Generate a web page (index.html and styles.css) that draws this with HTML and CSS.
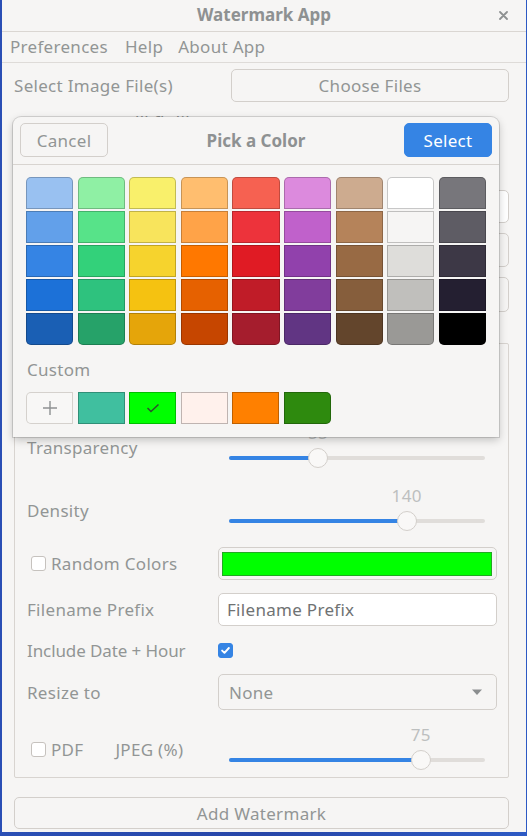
FILE: index.html
```html
<!DOCTYPE html>
<html>
<head>
<meta charset="utf-8">
<title>Watermark App</title>
<link rel="stylesheet" href="styles.css">
</head>
<body>
<div class="window">
  <header class="titlebar">
    <span></span>
    <span class="title">Watermark App</span>
    <span class="close"><svg width="9" height="9" viewBox="0 0 9 9"><path d="M1 1L8 8M8 1L1 8" stroke="#8e9192" stroke-width="1.8" stroke-linecap="round"/></svg></span>
  </header>
  <nav class="menubar">
    <span>Preferences</span><span>Help</span><span class="menu-about">About App</span>
  </nav>
  <main class="content">
    <div class="row row-files">
      <span class="label">Select Image File(s)</span>
      <button class="btn">Choose Files</button>
    </div>
    <div class="hint">lll flt lil</div>
    <div class="row row-a">
      <span class="label"></span>
      <div class="entry"></div>
    </div>
    <div class="row row-b">
      <span class="label"></span>
      <button class="btn"></button>
    </div>
    <div class="row row-c">
      <span class="label"></span>
      <button class="btn"></button>
    </div>

    <section class="frame">
      <div class="frow frow-trans">
        <span class="label slabel">Transparency</span>
        <div class="scale">
          <div class="scale-value-line"><span class="scale-value" style="left:34.8%">55</span></div>
          <div class="track-area"><div class="track"><div class="fill" style="width:34.8%"></div><div class="knob" style="left:34.8%"></div></div></div>
        </div>
      </div>
      <div class="frow frow-density">
        <span class="label slabel">Density</span>
        <div class="scale">
          <div class="scale-value-line"><span class="scale-value" style="left:69.4%">140</span></div>
          <div class="track-area"><div class="track"><div class="fill" style="width:69.4%"></div><div class="knob" style="left:69.4%"></div></div></div>
        </div>
      </div>
      <div class="frow frow-random">
        <label class="check-label"><span class="checkbox"></span>Random Colors</label>
        <div class="color-btn"><div class="color-fill"></div></div>
      </div>
      <div class="frow frow-prefix">
        <span class="label">Filename Prefix</span>
        <div class="entry entry-white">Filename Prefix</div>
      </div>
      <div class="frow frow-date">
        <span class="label narrow">Include Date + Hour</span>
        <span class="checkbox checked"><svg width="15" height="15" viewBox="0 0 15 15"><path d="M3.6 7.6L6.3 10.2L11.4 4.6" fill="none" stroke="#fff" stroke-width="2.2" stroke-linecap="round" stroke-linejoin="round"/></svg></span>
      </div>
      <div class="frow frow-resize">
        <span class="label">Resize to</span>
        <div class="combo"><span>None</span><svg width="12" height="7" viewBox="0 0 12 7"><path d="M1 0.5H11L6 6Z" fill="#8b8e8f"/></svg></div>
      </div>
      <div class="frow frow-pdf">
        <div class="pdf-cell">
          <label class="check-label slabel"><span class="checkbox"></span>PDF</label>
          <span class="label slabel">JPEG (%)</span>
        </div>
        <div class="scale">
          <div class="scale-value-line"><span class="scale-value" style="left:74.9%">75</span></div>
          <div class="track-area"><div class="track"><div class="fill" style="width:74.9%"></div><div class="knob" style="left:74.9%"></div></div></div>
        </div>
      </div>
    </section>

    <button class="btn btn-add">Add Watermark</button>
  </main>

  <div class="dialog">
    <div class="dlg-header">
      <button class="btn dlg-btn">Cancel</button>
      <span class="dlg-title">Pick a Color</span>
      <button class="btn dlg-btn btn-blue">Select</button>
    </div>
    <div class="dlg-body">
      <div class="palette">
        <div class="sw" style="background:#99c1f1"></div>
        <div class="sw" style="background:#8ff0a4"></div>
        <div class="sw" style="background:#f9f06b"></div>
        <div class="sw" style="background:#ffbe6f"></div>
        <div class="sw" style="background:#f66151"></div>
        <div class="sw" style="background:#dc8add"></div>
        <div class="sw" style="background:#cdab8f"></div>
        <div class="sw" style="background:#ffffff"></div>
        <div class="sw" style="background:#77767b"></div>

        <div class="sw" style="background:#62a0ea"></div>
        <div class="sw" style="background:#57e389"></div>
        <div class="sw" style="background:#f8e45c"></div>
        <div class="sw" style="background:#ffa348"></div>
        <div class="sw" style="background:#ed333b"></div>
        <div class="sw" style="background:#c061cb"></div>
        <div class="sw" style="background:#b5835a"></div>
        <div class="sw" style="background:#f6f5f4"></div>
        <div class="sw" style="background:#5e5c64"></div>

        <div class="sw" style="background:#3584e4"></div>
        <div class="sw" style="background:#33d17a"></div>
        <div class="sw" style="background:#f6d32d"></div>
        <div class="sw" style="background:#ff7800"></div>
        <div class="sw" style="background:#e01b24"></div>
        <div class="sw" style="background:#9141ac"></div>
        <div class="sw" style="background:#986a44"></div>
        <div class="sw" style="background:#deddda"></div>
        <div class="sw" style="background:#3d3846"></div>

        <div class="sw" style="background:#1c71d8"></div>
        <div class="sw" style="background:#2ec27e"></div>
        <div class="sw" style="background:#f5c211"></div>
        <div class="sw" style="background:#e66100"></div>
        <div class="sw" style="background:#c01c28"></div>
        <div class="sw" style="background:#813d9c"></div>
        <div class="sw" style="background:#865e3c"></div>
        <div class="sw" style="background:#c0bfbc"></div>
        <div class="sw" style="background:#241f31"></div>

        <div class="sw" style="background:#1a5fb4"></div>
        <div class="sw" style="background:#26a269"></div>
        <div class="sw" style="background:#e5a50a"></div>
        <div class="sw" style="background:#c64600"></div>
        <div class="sw" style="background:#a51d2d"></div>
        <div class="sw" style="background:#613583"></div>
        <div class="sw" style="background:#63452c"></div>
        <div class="sw" style="background:#9a9996"></div>
        <div class="sw" style="background:#000000"></div>
      </div>
      <div class="custom-label">Custom</div>
      <div class="custom-row">
        <div class="cs add-custom"><svg width="16" height="16" viewBox="0 0 16 16"><path d="M8 1V15M1 8H15" stroke="#8e9192" stroke-width="1.4"/></svg></div>
        <div class="cs" style="background:#40bf9f"></div>
        <div class="cs" style="background:#00ff00"><svg width="14" height="10" viewBox="0 0 14 10"><path d="M1.5 5L5 8.5L12.5 1.5" fill="none" stroke="#2e4d2e" stroke-width="1.5"/></svg></div>
        <div class="cs" style="background:#fff1ec"></div>
        <div class="cs" style="background:#ff8000"></div>
        <div class="cs last" style="background:#2e8a0e"></div>
      </div>
    </div>
  </div>
</div>
</body>
</html>
```

FILE: styles.css
```css
* { box-sizing: border-box; }

html, body {
  margin: 0;
  padding: 0;
}

body {
  width: 527px;
  height: 836px;
  overflow: hidden;
  background: linear-gradient(90deg, #2a4fb5 0%, #2746a8 50%, #2d5ac4 100%);
  font-family: "Noto Sans", "Open Sans", sans-serif;
  font-size: 17px;
  letter-spacing: 0.3px;
  color: #929595;
}

.window {
  position: relative;
  margin-left: 2px;
  width: 524px;
  height: 832px;
  background: #f6f5f4;
  display: flex;
  flex-direction: column;
}

/* title bar */
.titlebar {
  height: 32px;
  border-bottom: 1px solid #dad6d2;
  display: grid;
  grid-template-columns: 1fr auto 1fr;
  align-items: center;
  padding-bottom: 3px;
}
.title {
  font-weight: bold;
  font-size: 17px;
  letter-spacing: 0;
  color: #8e9192;
}
.close {
  justify-self: end;
  margin-right: 18px;
  display: flex;
  margin-top: 2px;
}

/* menu bar */
.menubar {
  height: 31px;
  border-bottom: 1px solid #dedbd8;
  display: flex;
  align-items: center;
  gap: 17px;
  padding-left: 8px;
  padding-bottom: 2px;
}
.menu-about { margin-left: -2px; }

/* content */
.content {
  display: flex;
  flex-direction: column;
  padding: 0 17px 0 12px;
}

.row {
  display: grid;
  grid-template-columns: 217px 1fr;
  align-items: center;
}

.row-files { margin-top: 6px; height: 33px; }
.hint { margin-top: 8px; height: 24px; line-height: 24px; padding-left: 121px; }
.row-a { margin-top: 56px; height: 33px; }
.row-b { margin-top: 10px; height: 34px; }
.row-c { margin-top: 10px; height: 35px; }

.label { white-space: nowrap; }
.narrow { letter-spacing: -0.1px; }

.btn {
  font-family: inherit;
  font-size: 17px;
  letter-spacing: 0.3px;
  color: #929595;
  background: #f6f5f4;
  border: 1px solid #d3cfcb;
  border-radius: 5px;
  height: 100%;
  padding: 0;
}

.entry {
  height: 100%;
  border: 1px solid #d3cfcb;
  border-radius: 5px;
  background: #ffffff;
}

/* frame */
.frame {
  margin-top: 31px;
  height: 435px;
  border: 1px solid #d8d4d0;
  border-radius: 2px;
  padding: 80px 11px 1px 12px;
  display: flex;
  flex-direction: column;
}

.frow {
  display: grid;
  grid-template-columns: 191px 1fr;
  align-items: center;
}

.frow-trans { height: 50px; }
.frow-density { margin-top: 13px; height: 50px; }
.frow-random { margin-top: 10px; height: 33px; }
.frow-prefix { margin-top: 13px; height: 33px; }
.frow-date { margin-top: 8px; height: 33px; }
.frow-resize { margin-top: 7px; height: 36px; }
.frow-pdf { margin-top: 16px; height: 50px; }

.slabel { padding-bottom: 4px; }

/* scale */
.scale {
  height: 50px;
  padding: 0 12px 0 11px;
  display: flex;
  flex-direction: column;
}
.scale-value-line {
  position: relative;
  height: 18px;
}
.scale-value {
  position: absolute;
  top: 0;
  line-height: 18px;
  transform: translateX(-50%);
  color: #bdbfbf;
  font-size: 17px;
}
.track-area {
  height: 32px;
  display: flex;
  align-items: center;
}
.track {
  position: relative;
  flex: 1;
  height: 4px;
  border-radius: 2px;
  background: #e0ddda;
}
.fill {
  height: 100%;
  border-radius: 2px;
  background: #3584e4;
}
.knob {
  position: absolute;
  top: 50%;
  width: 20px;
  height: 20px;
  margin-left: -10px;
  margin-top: -10px;
  border-radius: 50%;
  background: #f9f8f7;
  border: 1px solid #d3cfcb;
}

/* checkbox */
.check-label {
  display: flex;
  align-items: center;
  white-space: nowrap;
}
.checkbox {
  display: inline-flex;
  width: 15px;
  height: 15px;
  border: 1px solid #c6c2be;
  border-radius: 3px;
  background: #ffffff;
  margin-left: 4px;
  margin-right: 5px;
}
.frow-date .checkbox {
  margin-left: 0;
}
.checkbox.checked {
  background: #3584e4;
  border-color: #3584e4;
  align-items: center;
  justify-content: center;
}

/* color button */
.color-btn {
  height: 33px;
  border: 1px solid #d3cfcb;
  border-radius: 5px;
  background: #f6f5f4;
  padding: 4px 4px 3px 3px;
}
.color-fill {
  height: 100%;
  background: #00ff00;
  border: 1px solid #22a822;
}

.entry-white {
  padding-left: 8px;
  display: flex;
  align-items: center;
  color: #6f7273;
}

.combo {
  height: 36px;
  border: 1px solid #d3cfcb;
  border-radius: 5px;
  background: #f6f5f4;
  display: flex;
  align-items: center;
  justify-content: space-between;
  padding: 0 13px 0 10px;
}

.pdf-cell {
  display: flex;
  align-items: center;
  gap: 32px;
}

.btn-add {
  margin-top: 19px;
  height: 32px;
}

/* dialog */
.dialog {
  position: absolute;
  left: 11px;
  top: 117px;
  width: 486px;
  height: 320px;
  background: #f6f5f4;
  border-radius: 8px 8px 0 0;
  box-shadow: 0 0 0 1px rgba(0, 0, 0, 0.13), 0 3px 8px rgba(0, 0, 0, 0.22);
  display: flex;
  flex-direction: column;
}
.dlg-header {
  height: 48px;
  border-bottom: 1px solid #d8d4d0;
  display: flex;
  align-items: center;
  justify-content: space-between;
  padding: 0 7px 1px 7px;
}
.dlg-btn {
  width: 88px;
  height: 34px;
}
.btn-blue {
  background: #3584e4;
  border-color: #3584e4;
  color: #ffffff;
}
.dlg-title {
  font-weight: bold;
  font-size: 17px;
  letter-spacing: 0;
  color: #8e9192;
}
.dlg-body {
  padding: 12px 13px 0 13px;
  display: flex;
  flex-direction: column;
}
.palette {
  width: 460px;
  display: grid;
  grid-template-columns: repeat(9, 1fr);
  grid-auto-rows: 32px;
  column-gap: 4.5px;
  row-gap: 2px;
}
.sw {
  box-shadow: inset 0 0 0 1px rgba(0, 0, 0, 0.22);
}
.sw:nth-child(-n+9) { border-radius: 5px 5px 0 0; }
.sw:nth-child(n+37) { border-radius: 0 0 5px 5px; }

.custom-label {
  margin-top: 13px;
  height: 24px;
  line-height: 24px;
  padding-left: 1px;
}
.custom-row {
  margin-top: 10px;
  display: grid;
  grid-template-columns: repeat(6, 47.1px);
  column-gap: 4.5px;
  height: 32px;
}
.cs {
  box-shadow: inset 0 0 0 1px rgba(0, 0, 0, 0.25);
  display: flex;
  align-items: center;
  justify-content: center;
}
.add-custom {
  background: #f8f7f6;
  box-shadow: inset 0 0 0 1px #d5d1cd;
  border-radius: 5px 0 0 5px;
}
.cs.last {
  border-radius: 0 5px 5px 0;
}
```
